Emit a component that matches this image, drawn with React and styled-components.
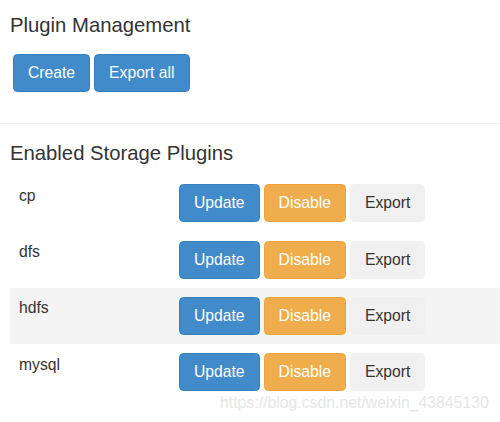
import React from "react";
import styled, { createGlobalStyle } from "styled-components";

const Global = createGlobalStyle`
  html, body { margin: 0; padding: 0; background: #fff; }
  body {
    font-family: "Liberation Sans", Arial, sans-serif;
    color: #333;
    font-size: 15.7px;
    line-height: 22px;
  }
`;

const Page = styled.div`
  position: relative;
  width: 500px;
  height: 422px;
  overflow: hidden;
`;

const Section = styled.section`
  padding: 0 10px;
`;

const Title = styled.h4`
  margin: ${(p) => p.$top}px 0 0;
  font-size: 20.3px;
  line-height: 22px;
  font-weight: 400;
  color: #333;
`;

const Toolbar = styled.div`
  display: flex;
  gap: 4px;
  margin-top: 18px;
  padding-left: 3px;
`;

const variants = {
  primary: { bg: "#428bca", border: "#357ebd", color: "#fff" },
  warning: { bg: "#f0ad4e", border: "#eea236", color: "#fff" },
  default: { bg: "#f0f0f0", border: "#f0f0f0", color: "#333" },
};

const Button = styled.button`
  box-sizing: border-box;
  height: 38px;
  padding: 0 14px;
  font-family: "Liberation Sans", Arial, sans-serif;
  font-size: 15.7px;
  line-height: 22px;
  border-radius: 4.4px;
  border: 1px solid ${(p) => variants[p.$v].border};
  background: ${(p) => variants[p.$v].bg};
  color: ${(p) => variants[p.$v].color};
  cursor: pointer;
`;

const Divider = styled.hr`
  margin: 31px 0 0;
  border: 0;
  border-top: 1px solid #eee;
`;

const Table = styled.div`
  margin: 11px 0 0 10px;
`;

const Row = styled.div`
  display: grid;
  grid-template-columns: 142px 1fr;
  column-gap: 18px;
  align-items: start;
  padding: 9.3px 9px 9px;
  background: ${(p) => (p.$striped ? "#f4f4f4" : "transparent")};
`;

const Name = styled.div`
  font-size: 15.7px;
  line-height: 22px;
  padding-top: 0.4px;
`;

const Actions = styled.div`
  display: flex;
  gap: 4px;
`;

const Watermark = styled.div`
  position: absolute;
  left: 220px;
  top: 393px;
  font-size: 15.8px;
  line-height: 20px;
  color: #e6e6e6;
  white-space: nowrap;
  pointer-events: none;
`;

const plugins = ["cp", "dfs", "hdfs", "mysql"];

export default function App() {
  return (
    <Page>
      <Global />
      <Section>
        <Title $top={14}>Plugin Management</Title>
        <Toolbar>
          <Button $v="primary">Create</Button>
          <Button $v="primary">Export all</Button>
        </Toolbar>
      </Section>
      <Divider />
      <Section>
        <Title $top={18}>Enabled Storage Plugins</Title>
      </Section>
      <Table>
        {plugins.map((name, i) => (
          <Row key={name} $striped={i === 2}>
            <Name>{name}</Name>
            <Actions>
              <Button $v="primary">Update</Button>
              <Button $v="warning">Disable</Button>
              <Button $v="default">Export</Button>
            </Actions>
          </Row>
        ))}
      </Table>
      <Watermark>https://blog.csdn.net/weixin_43845130</Watermark>
    </Page>
  );
}
